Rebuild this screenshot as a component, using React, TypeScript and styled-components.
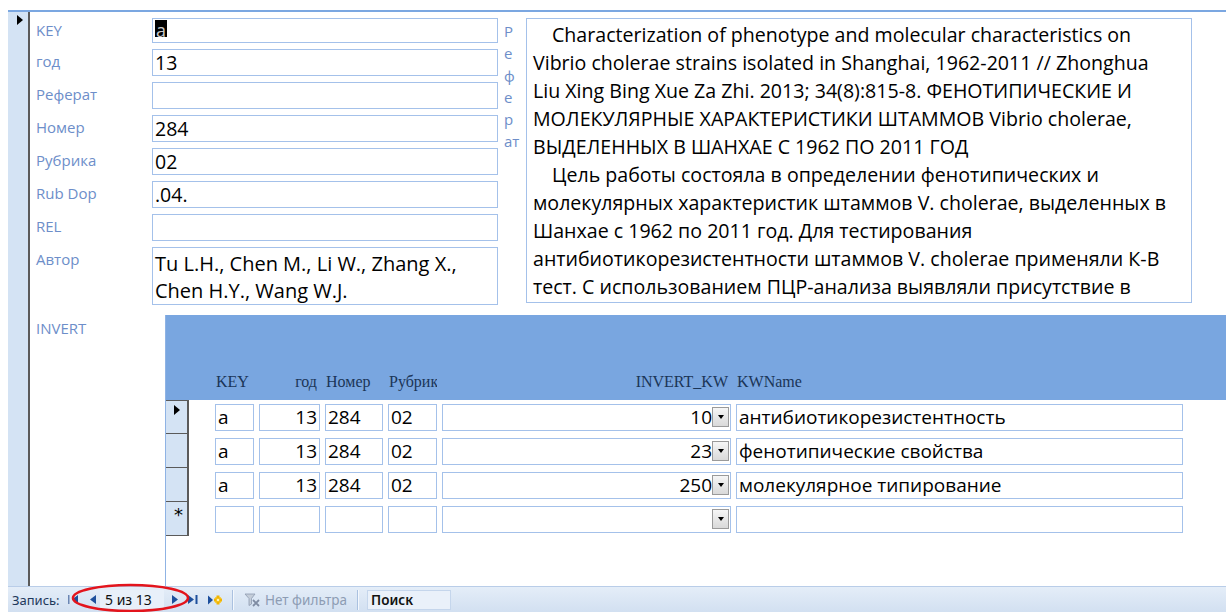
import React from 'react'
import styled, { createGlobalStyle } from 'styled-components'

const colors = {
  frame: '#7ba7e1',
  fieldBorder: '#a4c1ea',
  label: '#6d8ec9',
  selector: '#d4e3f4',
  selectorEdge: '#5a5a5a',
  header: '#79a6e0',
  headerText: '#1b3557',
  navText: '#1e395b',
  navIcon: '#1d4f9c',
}

const GlobalStyle = createGlobalStyle`
  html, body {
    margin: 0;
    padding: 0;
    background: #fff;
  }
  body {
    font-family: 'Open Sans', 'Noto Sans', sans-serif;
  }
`

const Screen = styled.div`
  position: relative;
  width: 1226px;
  height: 612px;
  overflow: hidden;
  padding-top: 10px;
  box-sizing: border-box;
  display: flex;
  flex-direction: column;
  background: #fff;
`

const FormFrame = styled.div`
  margin-left: 8px;
  flex: 1;
  min-height: 0;
  display: flex;
  border-top: 2px solid ${colors.frame};
`

const RecordSelector = styled.div`
  width: 22px;
  flex-shrink: 0;
  box-sizing: border-box;
  background: ${colors.selector};
  border-right: 2px solid ${colors.selectorEdge};
  padding: 3px 0 0 9px;
`

const Pointer = styled.div`
  width: 0;
  height: 0;
  border-left: 6px solid #000;
  border-top: 5px solid transparent;
  border-bottom: 5px solid transparent;
`

const FormBody = styled.div`
  flex: 1;
  display: flex;
  flex-direction: column;
  padding-left: 6px;
  min-width: 0;
`

const TopSection = styled.div`
  display: flex;
  align-items: flex-start;
  padding-top: 6px;
`

const FieldList = styled.div`
  display: grid;
  grid-template-columns: 116px 346px;
  row-gap: 6px;
`

const Label = styled.div`
  font-size: 15px;
  line-height: 18px;
  color: ${colors.label};
  padding-top: 3px;
`

const FieldBox = styled.div<{ $h?: number }>`
  height: ${({ $h }) => $h ?? 27}px;
  box-sizing: border-box;
  border: 1px solid ${colors.fieldBorder};
  font-size: 19.5px;
  line-height: 25px;
  padding: 0 2px;
  color: #000;
  overflow: hidden;
  white-space: nowrap;
`

const MultiLineBox = styled(FieldBox)`
  font-size: 20px;
  line-height: 27px;
  padding-top: 2px;
`

const Caret = styled.span`
  display: inline-block;
  vertical-align: top;
  margin-top: 1px;
  background: linear-gradient(#000 0 80%, transparent 80%);
  color: #c9c9c9;
  font-size: 18px;
  line-height: 21px;
  height: 21px;
  padding: 0 1px;
`

const VerticalLabel = styled.div`
  width: 28px;
  box-sizing: border-box;
  padding: 2px 0 0 6px;
  font-size: 15px;
  line-height: 22px;
  color: ${colors.label};
`

const Memo = styled.div`
  width: 666px;
  height: 285px;
  box-sizing: border-box;
  border: 1px solid ${colors.fieldBorder};
  padding: 2px 6px;
  font-size: 19.6px;
  line-height: 28px;
  color: #000;
  overflow: hidden;
  white-space: nowrap;
`

const MemoLine = styled.div<{ $indent?: boolean }>`
  text-indent: ${({ $indent }) => ($indent ? '19px' : '0')};
`

const LowerSection = styled.div`
  flex: 1;
  display: flex;
  margin-top: 10px;
  min-height: 0;
`

const LowerLabel = styled(Label)`
  width: 129px;
  flex-shrink: 0;
  padding-top: 4px;
`

const Subform = styled.div`
  flex: 1;
  display: flex;
  flex-direction: column;
  border-left: 1px solid #8fb3e4;
  min-width: 0;
`

const columns = '39px 61px 58px 49px 289px 447px'

const SubHeader = styled.div`
  height: 85px;
  flex-shrink: 0;
  background: ${colors.header};
  display: flex;
  align-items: flex-end;
  padding: 0 0 9px 49px;
  box-sizing: border-box;
`

const HeaderGrid = styled.div`
  display: grid;
  grid-template-columns: ${columns};
  column-gap: 5px;
`

const HeaderCell = styled.div<{ $align?: 'left' | 'right' }>`
  font-family: 'Liberation Serif', 'DejaVu Serif', serif;
  font-size: 16px;
  line-height: 19px;
  color: ${colors.headerText};
  text-align: ${({ $align }) => $align ?? 'left'};
  padding: 0 3px 0 1px;
  overflow: hidden;
  white-space: nowrap;
`

const DataRow = styled.div`
  display: flex;
  height: 34px;
  flex-shrink: 0;
`

const RowSelector = styled.div<{ $first?: boolean }>`
  width: 23px;
  flex-shrink: 0;
  box-sizing: border-box;
  background: ${colors.selector};
  border-right: 2px solid ${colors.selectorEdge};
  border-bottom: 1px solid ${colors.selectorEdge};
  border-top: ${({ $first }) => ($first ? `1px solid ${colors.selectorEdge}` : 'none')};
  padding: 4px 0 0 8px;
  font-family: 'DejaVu Sans', sans-serif;
  font-size: 18px;
  line-height: 18px;
  color: #000;
`

const RowCells = styled.div`
  display: grid;
  grid-template-columns: ${columns};
  column-gap: 5px;
  margin-left: 26px;
  padding-top: 4px;
`

const Cell = styled.div<{ $align?: 'left' | 'right' }>`
  height: 27px;
  box-sizing: border-box;
  border: 1px solid ${colors.fieldBorder};
  font-size: 19px;
  line-height: 25px;
  padding: 0 2px;
  text-align: ${({ $align }) => $align ?? 'left'};
  color: #000;
  white-space: nowrap;
  overflow: hidden;
`

const ComboCell = styled(Cell)`
  display: flex;
  padding-right: 1px;
`

const ComboValue = styled.span`
  flex: 1;
  text-align: right;
`

const ComboButton = styled.span`
  width: 17px;
  height: 20px;
  margin-top: 2px;
  box-sizing: border-box;
  border: 1px solid #9a9a9a;
  background: linear-gradient(#f6f6f6, #d9d9d9);
  display: flex;
  align-items: center;
  justify-content: center;
`

const ComboArrow = styled.span`
  width: 0;
  height: 0;
  border-top: 4px solid #000;
  border-left: 3px solid transparent;
  border-right: 3px solid transparent;
`

const NavBar = styled.div`
  height: 26px;
  flex-shrink: 0;
  margin-left: 8px;
  box-sizing: border-box;
  border-top: 1px solid #b9cde8;
  background: linear-gradient(#e4edf8, #d2e0f1);
  display: flex;
  align-items: center;
  padding-left: 4px;
  font-family: 'Noto Sans', 'Open Sans', sans-serif;
  font-size: 13px;
  color: ${colors.navText};
`

const NavCaption = styled.span`
  width: 56px;
  flex-shrink: 0;
`

const NavButton = styled.span<{ $w: number; $start?: boolean }>`
  width: ${({ $w }) => $w}px;
  flex-shrink: 0;
  display: flex;
  align-items: center;
  justify-content: ${({ $start }) => ($start ? 'flex-start' : 'center')};
  height: 18px;
`

const RecordBox = styled.span`
  width: 64px;
  height: 20px;
  line-height: 20px;
  padding-left: 5px;
  box-sizing: border-box;
  background: #e8f0fa;
  color: #111;
  font-size: 14px;
  margin-right: 4px;
  white-space: nowrap;
`

const NavSeparator = styled.span<{ $before?: number }>`
  width: 1px;
  height: 20px;
  background: #aac1e0;
  box-shadow: 1px 0 0 #f4f8fd;
  margin: 0 9px 0 ${({ $before }) => $before ?? 9}px;
`

const FilterLabel = styled.span`
  display: flex;
  align-items: center;
  gap: 5px;
  color: #8d9cb3;
  font-size: 13.5px;
  padding-left: 2px;
  width: 104px;
`

const SearchBox = styled.span`
  width: 84px;
  height: 20px;
  line-height: 18px;
  box-sizing: border-box;
  border: 1px solid #c5d6ec;
  background: #eaf1fa;
  padding-left: 3px;
  font-size: 13.5px;
  font-weight: 600;
  color: #111;
`

const Highlight = styled.svg`
  position: absolute;
  left: 71px;
  top: 583px;
  pointer-events: none;
`

const abstractLines: { text: string; indent?: boolean }[] = [
  { text: 'Characterization of phenotype and molecular characteristics on', indent: true },
  { text: 'Vibrio cholerae strains isolated in Shanghai, 1962-2011 // Zhonghua' },
  { text: 'Liu Xing Bing Xue Za Zhi. 2013; 34(8):815-8. ФЕНОТИПИЧЕСКИЕ И' },
  { text: 'МОЛЕКУЛЯРНЫЕ ХАРАКТЕРИСТИКИ ШТАММОВ Vibrio cholerae,' },
  { text: 'ВЫДЕЛЕННЫХ В ШАНХАЕ С 1962 ПО 2011 ГОД' },
  { text: 'Цель работы состояла в определении фенотипических и', indent: true },
  { text: 'молекулярных характеристик штаммов V. cholerae, выделенных в' },
  { text: 'Шанхае с 1962 по 2011 год. Для тестирования' },
  { text: 'антибиотикорезистентности штаммов V. cholerae применяли К-В' },
  { text: 'тест. С использованием ПЦР-анализа выявляли присутствие в' },
]

const keywords = [
  { kw: '10', name: 'антибиотикорезистентность' },
  { kw: '23', name: 'фенотипические свойства' },
  { kw: '250', name: 'молекулярное типирование' },
]

const Tri = ({ dir }: { dir: 'left' | 'right' }) => (
  <svg width="6" height="9" viewBox="0 0 6 9">
    {dir === 'left' ? <path d="M6 0 L0 4.5 L6 9 Z" fill={colors.navIcon} /> : <path d="M0 0 L6 4.5 L0 9 Z" fill={colors.navIcon} />}
  </svg>
)

const FirstIcon = () => (
  <svg width="12" height="9" viewBox="0 0 12 9">
    <rect x="0" y="0" width="1.5" height="9" fill="#6b86b3" />
    <path d="M10 0 L4 4.5 L10 9 Z" fill={colors.navIcon} />
  </svg>
)

const LastIcon = () => (
  <svg width="10" height="9" viewBox="0 0 10 9">
    <path d="M0 0 L6 4.5 L0 9 Z" fill={colors.navIcon} />
    <rect x="7.5" y="0" width="2" height="9" fill={colors.navIcon} />
  </svg>
)

const NewIcon = () => (
  <svg width="14" height="10" viewBox="0 0 14 10">
    <path d="M0 0.5 L5 5 L0 9.5 Z" fill={colors.navIcon} />
    <g fill="#f2b400">
      <rect x="7" y="2" width="6" height="6" fill="#f7d24a" />
      <rect x="8.5" y="0.5" width="3" height="9" />
      <rect x="6" y="3.5" width="8" height="3" />
    </g>
    <rect x="8.8" y="3.8" width="2.4" height="2.4" fill="#fff3b0" />
  </svg>
)

const FilterIcon = () => (
  <svg width="16" height="14" viewBox="0 0 16 14">
    <path d="M1 1 H11 L7.5 5.5 V11 L5 12.5 V5.5 Z" fill="#c4cdd9" stroke="#8e9bb0" strokeWidth="0.8" />
    <path d="M9 7 L15 13 M15 7 L9 13" stroke="#7f8ca3" strokeWidth="1.8" />
  </svg>
)

const fields: { label: string; value?: React.ReactNode; h?: number }[] = [
  { label: 'KEY', value: <Caret>a</Caret>, h: 25 },
  { label: 'год', value: '13' },
  { label: 'Реферат' },
  { label: 'Номер', value: '284' },
  { label: 'Рубрика', value: '02' },
  { label: 'Rub Dop', value: '.04.' },
  { label: 'REL' },
]

const App: React.FC = () => {
  return (
    <Screen>
      <GlobalStyle />
      <FormFrame>
        <RecordSelector>
          <Pointer />
        </RecordSelector>
        <FormBody>
          <TopSection>
            <FieldList>
              {fields.map(({ label, value, h }) => (
                <React.Fragment key={label}>
                  <Label>{label}</Label>
                  <FieldBox $h={h}>{value}</FieldBox>
                </React.Fragment>
              ))}
              <Label>Автор</Label>
              <MultiLineBox $h={58}>
                Tu L.H., Chen M., Li W., Zhang X.,
                <br />
                Chen H.Y., Wang W.J.
              </MultiLineBox>
            </FieldList>
            <VerticalLabel>
              {['Р', 'е', 'ф', 'е', 'р', 'ат'].map((s, i) => (
                <div key={i}>{s}</div>
              ))}
            </VerticalLabel>
            <Memo>
              {abstractLines.map(({ text, indent }, i) => (
                <MemoLine key={i} $indent={indent}>
                  {text}
                </MemoLine>
              ))}
            </Memo>
          </TopSection>
          <LowerSection>
            <LowerLabel>INVERT</LowerLabel>
            <Subform>
              <SubHeader>
                <HeaderGrid>
                  <HeaderCell>KEY</HeaderCell>
                  <HeaderCell $align="right">год</HeaderCell>
                  <HeaderCell>Номер</HeaderCell>
                  <HeaderCell>Рубрика</HeaderCell>
                  <HeaderCell $align="right">INVERT_KW</HeaderCell>
                  <HeaderCell>KWName</HeaderCell>
                </HeaderGrid>
              </SubHeader>
              {keywords.map(({ kw, name }, i) => (
                <DataRow key={kw}>
                  <RowSelector $first={i === 0}>{i === 0 && <Pointer />}</RowSelector>
                  <RowCells>
                    <Cell>a</Cell>
                    <Cell $align="right">13</Cell>
                    <Cell>284</Cell>
                    <Cell>02</Cell>
                    <ComboCell>
                      <ComboValue>{kw}</ComboValue>
                      <ComboButton>
                        <ComboArrow />
                      </ComboButton>
                    </ComboCell>
                    <Cell>{name}</Cell>
                  </RowCells>
                </DataRow>
              ))}
              <DataRow>
                <RowSelector>*</RowSelector>
                <RowCells>
                  <Cell />
                  <Cell />
                  <Cell />
                  <Cell />
                  <ComboCell>
                    <ComboValue />
                    <ComboButton>
                      <ComboArrow />
                    </ComboButton>
                  </ComboCell>
                  <Cell />
                </RowCells>
              </DataRow>
            </Subform>
          </LowerSection>
        </FormBody>
      </FormFrame>
      <NavBar>
        <NavCaption>Запись:</NavCaption>
        <NavButton $w={18} $start>
          <FirstIcon />
        </NavButton>
        <NavButton $w={14}>
          <Tri dir="left" />
        </NavButton>
        <RecordBox>5 из 13</RecordBox>
        <NavButton $w={14}>
          <Tri dir="right" />
        </NavButton>
        <NavButton $w={22}>
          <LastIcon />
        </NavButton>
        <NavButton $w={22}>
          <NewIcon />
        </NavButton>
        <NavSeparator $before={6} />
        <FilterLabel>
          <FilterIcon />
          Нет фильтра
        </FilterLabel>
        <NavSeparator />
        <SearchBox>Поиск</SearchBox>
      </NavBar>
      <Highlight width="119" height="30" viewBox="0 0 119 30">
        <ellipse cx="59.5" cy="15" rx="57.5" ry="13" fill="none" stroke="#e3141c" strokeWidth="2.6" />
      </Highlight>
    </Screen>
  )
}

export default App
